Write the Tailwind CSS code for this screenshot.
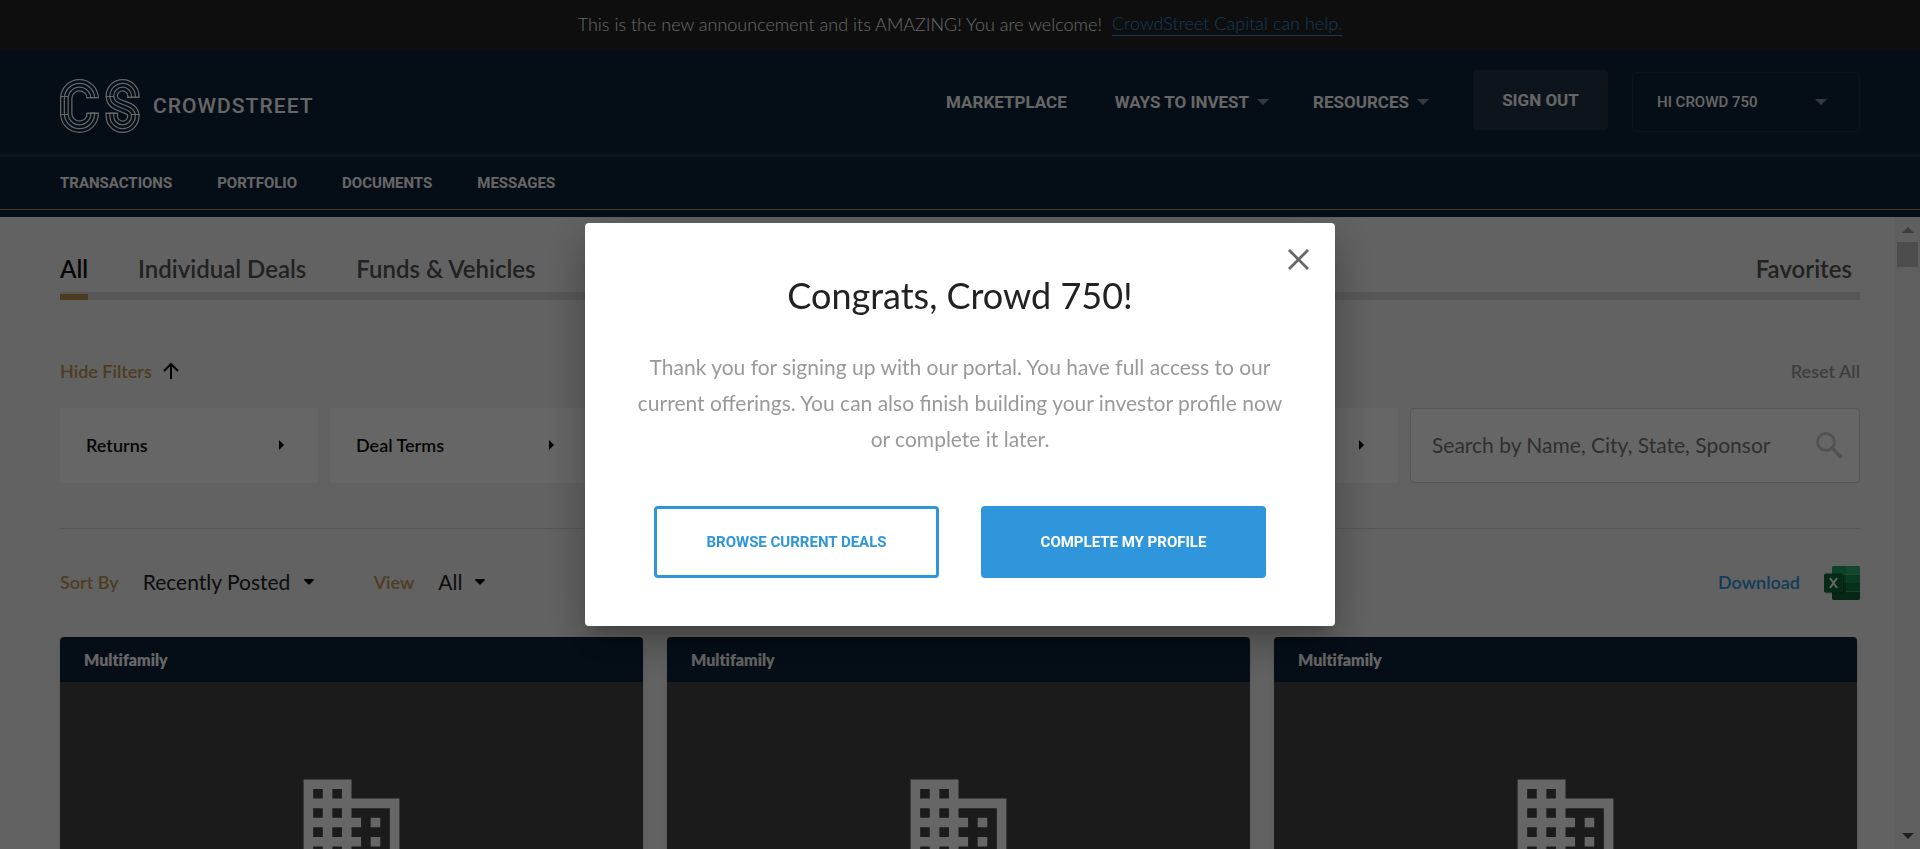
<!DOCTYPE html>
<html lang="en">
<head>
<meta charset="utf-8">
<meta name="viewport" content="width=device-width, initial-scale=1">
<title>CrowdStreet Marketplace</title>
<script src="https://cdn.jsdelivr.net/npm/@tailwindcss/browser@4"></script>
</head>
<body class="h-screen overflow-hidden bg-[#f4f4f4] font-['Lato',sans-serif] text-[#222]">

<svg class="hidden" aria-hidden="true">
  <symbol id="building" viewBox="0 0 24 24"><path fill="currentColor" d="M12 7V3H2v18h20V7H12zM6 19H4v-2h2v2zm0-4H4v-2h2v2zm0-4H4V9h2v2zm0-4H4V5h2v2zm4 12H8v-2h2v2zm0-4H8v-2h2v2zm0-4H8V9h2v2zm0-4H8V5h2v2zm10 12h-8v-2h2v-2h-2v-2h2v-2h-2V9h8v10zm-2-8h-2v2h2v-2zm0 4h-2v2h2v-2z"/></symbol>
  <symbol id="caret-down" viewBox="0 0 12 6"><path fill="currentColor" d="M0 0h12L6 6z"/></symbol>
  <symbol id="caret-small" viewBox="0 0 10 6"><path fill="currentColor" d="M1 0h8q1.500 .5 .5 1.500L6 5q-1 1-2 0L.5 1.500Q-.5 .5 1 0z"/></symbol>
  <symbol id="caret-right" viewBox="0 0 5 10"><path fill="currentColor" d="M0 0l5 5-5 5z"/></symbol>
</svg>

<div class="flex h-full flex-col">
  <div class="flex h-[49px] shrink-0 items-center justify-center gap-2.5 bg-[#232323] pb-0.5 text-lg font-light leading-6 text-white">
    <p>This is the new announcement and its AMAZING! You are welcome!</p>
    <a href="#" class="border-b border-[#2f96db] text-[#2f96db]">CrowdStreet Capital can help.</a>
  </div>

  <header class="shrink-0 bg-[#0d2339] pb-[7px] font-['Roboto',sans-serif] font-bold uppercase text-white">
    <div class="flex h-[105px] items-center justify-between px-[60px]">
      <a href="#" class="flex items-center gap-3 pt-2" aria-label="CrowdStreet">
        <svg class="h-[54px] w-[81px]" viewBox="0 0 81 54" fill="none">
          <g stroke="#fff" stroke-width="12.500"><path d="M32.750 18.500V19.500A13.250 13.250 0 0 0 6.250 19.500V34.500A13.250 13.250 0 0 0 32.750 34.500V33.500"/><path d="M73.400 18.500V17A10.800 10.750 0 0 0 51.800 17C51.800 30 73.400 25 73.400 37A10.800 10.750 0 0 1 51.800 37V33.500"/></g>
          <g stroke="#0d2339" stroke-width="10"><path d="M32.750 17.500V19.500A13.250 13.250 0 0 0 6.250 19.500V34.500A13.250 13.250 0 0 0 32.750 34.500V34.500"/><path d="M73.400 17.500V17A10.800 10.750 0 0 0 51.800 17C51.800 30 73.400 25 73.400 37A10.800 10.750 0 0 1 51.800 37V34.500"/></g>
          <g stroke="#fff" stroke-width="5"><path d="M32.750 18.500V19.500A13.250 13.250 0 0 0 6.250 19.500V34.500A13.250 13.250 0 0 0 32.750 34.500V33.500"/><path d="M73.400 18.500V17A10.800 10.750 0 0 0 51.800 17C51.800 30 73.400 25 73.400 37A10.800 10.750 0 0 1 51.800 37V33.500"/></g>
          <g stroke="#0d2339" stroke-width="2.600"><path d="M32.750 17.500V19.500A13.250 13.250 0 0 0 6.250 19.500V34.500A13.250 13.250 0 0 0 32.750 34.500V34.500"/><path d="M73.400 17.500V17A10.800 10.750 0 0 0 51.800 17C51.800 30 73.400 25 73.400 37A10.800 10.750 0 0 1 51.800 37V34.500"/></g>
          <path stroke="#fff" stroke-width="1.200" d="M0 17.500h8M0 35.500h8M26.500 18.500H39M26.500 34.500H39M45.500 17.500h9M67 18.500h12.500M45.500 34.500H58M71 35.500h9"/>
        </svg>
        <span class="text-[21px] font-medium leading-6 tracking-wider">CrowdStreet</span>
      </a>
      <nav class="flex items-center text-[17px] leading-6">
        <a href="#" class="mr-12">Marketplace</a>
        <a href="#" class="mr-11 flex items-center gap-2">Ways to invest <svg class="h-1.5 w-3 text-white/50"><use href="#caret-down"/></svg></a>
        <a href="#" class="mr-11 flex items-center gap-2">Resources <svg class="h-1.5 w-3 text-white/50"><use href="#caret-down"/></svg></a>
        <button class="mr-6 mb-1 h-[60px] w-[135px] rounded-sm bg-[#223444] font-bold uppercase">Sign out</button>
        <button class="flex h-[60px] w-[228px] items-center justify-between rounded-sm border border-white/5 pr-8 pl-6 text-[15px] font-medium uppercase">Hi Crowd 750 <svg class="h-1.5 w-3 text-white/50"><use href="#caret-down"/></svg></button>
      </nav>
    </div>
    <nav class="flex h-14 items-center gap-[45px] border-t-3 border-b border-t-[#1f3346] border-b-[#bf9a52] px-[60px] text-[15px]">
      <a href="#">Transactions</a><a href="#">Portfolio</a><a href="#">Documents</a><a href="#">Messages</a>
    </nav>
  </header>

  <div class="flex min-h-0 flex-1">
    <main class="min-w-0 flex-1 overflow-hidden pr-[35px] pl-[60px]">
      <nav class="flex h-[83px] justify-between border-b-8 border-[#dadada] pt-[34px] text-2xl leading-9 font-semibold text-[#555]">
        <div class="flex gap-[50px]">
          <a href="#" class="h-[49px] border-b-6 border-[#bf9a52] text-[#111]">All</a>
          <a href="#">Individual Deals</a>
          <a href="#">Funds &amp; Vehicles</a>
        </div>
        <a href="#" class="pr-2">Favorites</a>
      </nav>

      <div class="mt-[59px] flex items-center justify-between text-lg leading-6 font-semibold">
        <button class="flex items-center gap-2.5 text-[#bf9a52]">Hide Filters
          <svg class="size-[18px] text-black" viewBox="0 0 18 18" fill="none" stroke="currentColor" stroke-width="2"><path d="M9 17V2M2 9l7-7 7 7"/></svg>
        </button>
        <button class="text-[#999]">Reset All</button>
      </div>

      <div class="mt-[25px] flex h-[75px] gap-3 text-lg font-semibold text-[#111]">
        <button class="flex flex-1 items-center justify-between bg-white pr-[34px] pb-0.5 pl-[26px]">Returns <svg class="h-2.5 w-[5px] text-black"><use href="#caret-right"/></svg></button>
        <button class="flex flex-1 items-center justify-between bg-white pr-[34px] pb-0.5 pl-[26px]">Deal Terms <svg class="h-2.5 w-[5px] text-black"><use href="#caret-right"/></svg></button>
        <button aria-label="More filters" class="flex flex-1 items-center justify-end bg-white pr-[34px] pb-0.5 pl-[26px]"><svg class="h-2.5 w-[5px] text-black"><use href="#caret-right"/></svg></button>
        <button aria-label="More filters" class="flex flex-1 items-center justify-end bg-white pr-[34px] pb-0.5 pl-[26px]"><svg class="h-2.5 w-[5px] text-black"><use href="#caret-right"/></svg></button>
        <button aria-label="More filters" class="flex flex-1 items-center justify-end bg-white pr-[34px] pb-0.5 pl-[26px]"><svg class="h-2.5 w-[5px] text-black"><use href="#caret-right"/></svg></button>
        <label class="flex w-1/4 items-center rounded-sm border border-[#dadada] bg-white pr-4 pl-[21px] font-normal">
          <input type="search" aria-label="Search" placeholder="Search by Name, City, State, Sponsor" class="min-w-0 flex-1 text-[21px] outline-none placeholder:text-[#777]">
          <svg class="size-[27px] text-[#ccc]" viewBox="0 0 27 27" fill="none" stroke="currentColor"><circle cx="10" cy="10" r="8.500" stroke-width="2.800"/><path stroke-width="3.500" d="M16 16l9.500 9.500"/></svg>
        </label>
      </div>

      <div class="mt-[45px] flex h-[109px] items-center justify-between border-t border-[#dadada] text-lg font-semibold">
        <div class="flex items-center pb-0.5">
          <label for="sort" class="mr-6 text-[#bf9a52]">Sort By</label>
          <span class="mr-[60px] flex items-center gap-3 font-normal"><select id="sort" class="appearance-none text-[21px] leading-7"><option>Recently Posted</option></select><svg class="h-1.5 w-2.5 text-black"><use href="#caret-small"/></svg></span>
          <label for="view" class="mr-6 text-[#bf9a52]">View</label>
          <span class="flex items-center gap-3 font-normal"><select id="view" class="appearance-none text-[21px] leading-7"><option>All</option></select><svg class="h-1.5 w-2.5 text-black"><use href="#caret-small"/></svg></span>
        </div>
        <a href="#" class="flex items-center gap-6 text-[#2f96db]"><span class="pb-0.5">Download</span>
          <svg class="h-[34px] w-9" viewBox="0 0 36 34">
            <path fill="#21a366" d="M9 0h13v8.500H8V1z"/><path fill="#2fae74" d="M22 0h13l1 1v7.500H22z"/><path fill="#107c41" d="M8 8.500h14V17H8z"/><path fill="#1a9158" d="M22 8.500h14V17H22z"/><path fill="#185c37" d="M8 17h14v8.500h14V33l-1 1H9l-1-1z"/><path fill="#107c41" d="M22 17h14v8.500H22z"/>
            <rect x="1" y="8.500" width="19" height="19" rx="1.500" fill="#000" opacity=".25"/><rect y="7.500" width="19" height="19" rx="1.500" fill="#0e6b38"/>
            <path stroke="#fff" stroke-width="2" d="M6 12l7 10M13 12L6 22"/>
          </svg>
        </a>
      </div>

      <div class="grid grid-cols-3 gap-6 pr-[3px] text-base font-extrabold text-white [font-variant-ligatures:none]">
        <article class="overflow-hidden rounded-t shadow-md"><h2 class="flex h-[45px] items-center bg-[#0d2339] px-6">Multifamily</h2><div class="flex h-[280px] items-center justify-center bg-[#444]"><svg class="size-[115px]"><use href="#building"/></svg></div></article>
        <article class="overflow-hidden rounded-t shadow-md"><h2 class="flex h-[45px] items-center bg-[#0d2339] px-6">Multifamily</h2><div class="flex h-[280px] items-center justify-center bg-[#444]"><svg class="size-[115px]"><use href="#building"/></svg></div></article>
        <article class="overflow-hidden rounded-t shadow-md"><h2 class="flex h-[45px] items-center bg-[#0d2339] px-6">Multifamily</h2><div class="flex h-[280px] items-center justify-center bg-[#444]"><svg class="size-[115px]"><use href="#building"/></svg></div></article>
      </div>
    </main>
    <div class="flex w-[25px] flex-col items-center bg-[#eee] pt-2.5 pb-2.5" aria-hidden="true">
      <svg class="h-1.5 w-3 shrink-0 rotate-180 text-[#999]"><use href="#caret-down"/></svg>
      <div class="mt-[9px] h-[25px] w-[21px] bg-[#c1c1c1]"></div>
      <svg class="mt-auto h-1.5 w-3 shrink-0 text-[#505050]"><use href="#caret-down"/></svg>
    </div>
  </div>
</div>

<div class="fixed inset-0 flex items-center justify-center bg-black/60">
  <section role="dialog" aria-modal="true" aria-labelledby="dialog-title" class="relative w-full max-w-[750px] rounded-sm bg-white px-12 pt-12 pb-12 text-center shadow-[0_11px_15px_-7px_rgba(0,0,0,0.2),0_24px_38px_3px_rgba(0,0,0,0.14),0_9px_46px_8px_rgba(0,0,0,0.12)]">
    <button aria-label="Close" class="absolute top-[26px] right-[26px]"><svg class="size-[21px]" viewBox="0 0 21 21" stroke="#666" stroke-width="2.800"><path d="M1 1l19 19M20 1L1 20"/></svg></button>
    <h1 id="dialog-title" class="text-4xl leading-[48px]">Congrats, Crowd 750!</h1>
    <p class="mt-[30px] text-[21px] leading-9 text-[#999]">Thank you for signing up with our portal. You have full access to our current offerings. You can also finish building your investor profile now or complete it later.</p>
    <div class="mt-[49px] flex justify-center gap-[42px] font-['Roboto',sans-serif] text-[15px] font-bold">
      <button class="h-[72px] w-[285px] rounded-sm border-3 border-[#2f96db] text-[#2f96db]">BROWSE CURRENT DEALS</button>
      <button class="h-[72px] w-[285px] rounded-sm bg-[#2f96db] text-white">COMPLETE MY PROFILE</button>
    </div>
  </section>
</div>
</body>
</html>
